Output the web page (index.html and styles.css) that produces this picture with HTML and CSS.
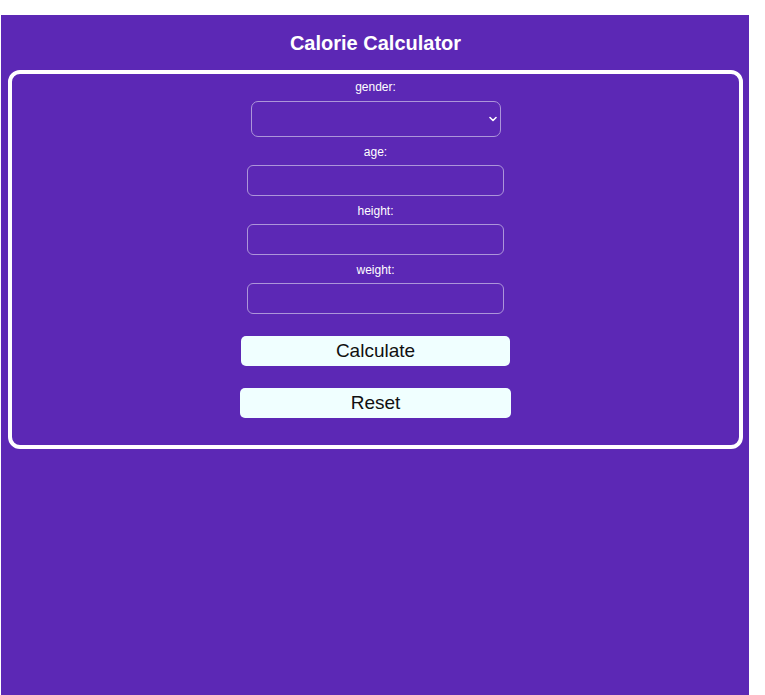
FILE: index.html
```html
<!DOCTYPE html>
<html lang="en">
<head>
<meta charset="utf-8">
<title>Calorie Calculator</title>
<link rel="stylesheet" href="styles.css">
</head>
<body>
<div class="app">
  <h1 class="title">Calorie Calculator</h1>
  <form class="card">
    <label class="label label-first" for="gender">gender:</label>
    <div class="select-wrap">
      <select id="gender" class="select"></select>
      <svg class="chevron" width="8" height="6" viewBox="0 0 8 6"><path d="M1 1.5 L4 4.5 L7 1.5" fill="none" stroke="#fff" stroke-width="1.6" stroke-linecap="round" stroke-linejoin="round"/></svg>
    </div>
    <label class="label" for="age">age:</label>
    <input id="age" class="field" type="text">
    <label class="label" for="height">height:</label>
    <input id="height" class="field" type="text">
    <label class="label" for="weight">weight:</label>
    <input id="weight" class="field field-last" type="text">
    <button type="button" class="btn btn-calc">Calculate</button>
    <button type="reset" class="btn btn-reset">Reset</button>
  </form>
</div>
</body>
</html>
```
FILE: styles.css
```css
html, body {
  margin: 0;
  padding: 0;
  background: #ffffff;
}
body {
  font-family: "Liberation Sans", Arial, sans-serif;
}
.app {
  margin: 15px 0 0 1px;
  width: 748px;
  height: 680px;
  background: #5c28b5;
  padding: 1px 0 0 7px;
  box-sizing: border-box;
}
.title {
  margin: 17px 0 0 0;
  height: 20px;
  line-height: 20px;
  text-align: center;
  color: #fff;
  font-size: 20px;
  font-weight: bold;
  width: 735px;
}
.card {
  margin-top: 17px;
  width: 735px;
  height: 379px;
  box-sizing: border-box;
  border: 4px solid #fff;
  border-radius: 12px;
  display: flex;
  flex-direction: column;
  align-items: center;
  padding-top: 7px;
}
.label {
  color: #fff;
  font-size: 12px;
  line-height: 13px;
  height: 13px;
  margin-bottom: 6px;
}
.label-first {
  margin-bottom: 7px;
}
.select-wrap {
  position: relative;
  width: 250px;
  height: 36px;
  margin-bottom: 9px;
}
.select {
  appearance: none;
  -webkit-appearance: none;
  width: 100%;
  height: 100%;
  box-sizing: border-box;
  background: transparent;
  border: 1px solid #ad95da;
  border-radius: 7px;
  margin: 0;
}
.chevron {
  position: absolute;
  right: 4px;
  top: 15px;
}
.field {
  width: 257px;
  height: 31px;
  box-sizing: border-box;
  background: transparent;
  border: 1px solid #ad95da;
  border-radius: 6px;
  margin: 0 0 9px 0;
  padding: 0;
}
.field-last {
  margin-bottom: 0;
}
.btn {
  height: 30px;
  box-sizing: border-box;
  background: #f0ffff;
  border: none;
  border-radius: 5px;
  font-family: "Liberation Sans", Arial, sans-serif;
  font-size: 19px;
  color: #111;
  padding: 0;
}
.btn-calc {
  width: 269px;
  margin-top: 22px;
}
.btn-reset {
  width: 271px;
  margin-top: 22px;
}
```
